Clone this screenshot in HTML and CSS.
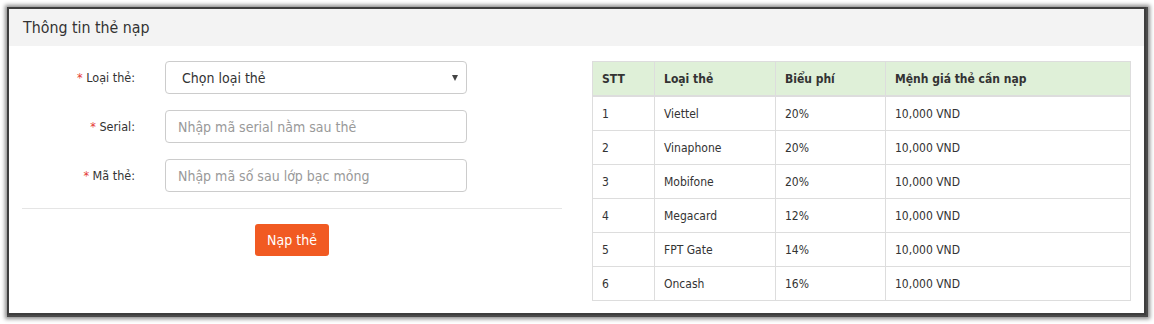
FILE: index.html
```html
<!DOCTYPE html>
<html lang="vi">
<head>
<meta charset="utf-8">
<title>Thông tin thẻ nạp</title>
<link rel="stylesheet" href="styles.css">
</head>
<body>
<div class="frame">
  <div class="panel">
    <div class="panel-heading">Thông tin thẻ nạp</div>
    <div class="panel-body">
      <form class="card-form">
        <div class="form-row">
          <label class="form-label"><span class="req">*</span> Loại thẻ:</label>
          <div class="select">
            <span class="select-text">Chọn loại thẻ</span>
            <span class="caret"></span>
          </div>
        </div>
        <div class="form-row">
          <label class="form-label"><span class="req">*</span> Serial:</label>
          <input class="input" type="text" placeholder="Nhập mã serial nằm sau thẻ">
        </div>
        <div class="form-row">
          <label class="form-label"><span class="req">*</span> Mã thẻ:</label>
          <input class="input" type="text" placeholder="Nhập mã số sau lớp bạc mỏng">
        </div>
        <div class="form-actions">
          <button type="button" class="btn">Nạp thẻ</button>
        </div>
      </form>
      <table class="rates">
        <thead>
          <tr><th class="c1">STT</th><th class="c2">Loại thẻ</th><th class="c3">Biểu phí</th><th>Mệnh giá thẻ cần nạp</th></tr>
        </thead>
        <tbody>
          <tr><td>1</td><td>Viettel</td><td>20%</td><td>10,000 VND</td></tr>
          <tr><td>2</td><td>Vinaphone</td><td>20%</td><td>10,000 VND</td></tr>
          <tr><td>3</td><td>Mobifone</td><td>20%</td><td>10,000 VND</td></tr>
          <tr><td>4</td><td>Megacard</td><td>12%</td><td>10,000 VND</td></tr>
          <tr><td>5</td><td>FPT Gate</td><td>14%</td><td>10,000 VND</td></tr>
          <tr><td>6</td><td>Oncash</td><td>16%</td><td>10,000 VND</td></tr>
        </tbody>
      </table>
    </div>
  </div>
</div>
</body>
</html>
```
FILE: styles.css
```css
html, body {
  margin: 0;
  padding: 0;
  background: #ffffff;
}
body {
  font-family: "DejaVu Sans Condensed", "DejaVu Sans", sans-serif;
  color: #333333;
}
.frame {
  padding: 9px 10px 11px 9px;
}
.panel {
  background: #ffffff;
  height: 304px;
  box-sizing: border-box;
  box-shadow: 0 0 0 2px #3e3e3e, 1px 1px 0 3px #4a4a4a, 1px 1px 4px 5px rgba(0,0,0,0.45);
}
.panel-heading {
  background: #f3f3f3;
  height: 37px;
  line-height: 37px;
  padding-left: 14px;
  font-size: 15.8px;
  color: #333333;
}
.panel-body {
  display: grid;
  grid-template-columns: 540px 539px;
  column-gap: 30px;
  padding: 15px 13px 0 13px;
}
.card-form {
  display: flex;
  flex-direction: column;
  gap: 16px;
  margin: 0;
}
.form-row {
  display: flex;
  align-items: center;
  height: 33px;
}
.form-label {
  width: 113px;
  text-align: right;
  font-size: 12.5px;
  color: #333333;
  margin-right: 30px;
}
.req {
  color: #e53935;
}
.select, .input {
  width: 302px;
  height: 33px;
  box-sizing: border-box;
  border: 1px solid #cccccc;
  border-radius: 4px;
  background: #ffffff;
  font-family: inherit;
  font-size: 14px;
}
.select {
  display: flex;
  align-items: center;
  justify-content: space-between;
  padding: 0 8px 0 16px;
  color: #333333;
}
.caret {
  width: 0;
  height: 0;
  border-left: 3.5px solid transparent;
  border-right: 3.5px solid transparent;
  border-top: 6px solid #444444;
}
.input {
  padding: 0 12px;
  outline: none;
}
.input::placeholder {
  color: #999999;
}
.form-actions {
  border-top: 1px solid #e5e5e5;
  padding-top: 15px;
  display: flex;
  justify-content: center;
}
.btn {
  background: #f15a22;
  color: #ffffff;
  border: none;
  border-radius: 3px;
  height: 32px;
  padding: 0 12px;
  font-family: inherit;
  font-size: 14px;
}
.rates {
  border-collapse: collapse;
  width: 539px;
  font-size: 12px;
  color: #333333;
  align-self: start;
}
.rates th, .rates td {
  border: 1px solid #dddddd;
  text-align: left;
  padding: 0 9px;
  height: 33px;
}
.rates th {
  background: #dff0d8;
  font-weight: bold;
  font-size: 12px;
  border-bottom-width: 2px;
}
.rates .c1 { width: 43px; }
.rates .c2 { width: 102px; }
.rates .c3 { width: 91px; }
```
